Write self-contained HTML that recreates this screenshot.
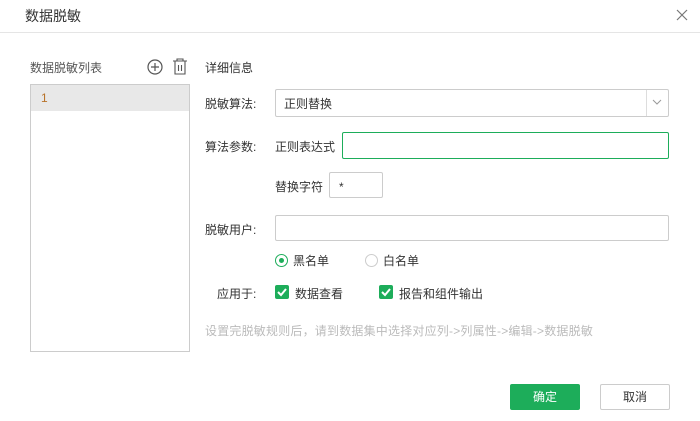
<!DOCTYPE html>
<html><head><meta charset="utf-8"><style>
*{box-sizing:border-box;margin:0;padding:0}
body{width:700px;height:421px;background:#fff;font-family:"Liberation Sans","Noto Sans CJK SC",sans-serif;font-size:12px;color:#333;position:relative;overflow:hidden}
.a{position:absolute}
.inp{position:absolute;border:1px solid #ccc;border-radius:2px;background:#fff}
</style></head><body>
<div class="a" style="left:25px;top:6px;font-size:14px;color:#333">数据脱敏</div>
<svg class="a" style="left:676px;top:9px" width="12" height="12"><path d="M1 1L11 11M11 1L1 11" stroke="#777" stroke-width="1.2"/></svg>
<div class="a" style="left:0;top:32px;width:700px;height:1px;background:#e5e5e5"></div>
<div class="a" style="left:30px;top:59px;color:#555">数据脱敏列表</div>
<svg class="a" style="left:147px;top:59px" width="16" height="16"><circle cx="8" cy="8" r="7" fill="none" stroke="#555" stroke-width="1.2"/><path d="M8 4V12M4 8H12" stroke="#555" stroke-width="1.2"/></svg>
<svg class="a" style="left:172px;top:58px" width="16" height="17"><path d="M1 3H15M5 3V1H11V3M3 3V16H13V3M6.5 7V13M9.5 7V13" fill="none" stroke="#555" stroke-width="1.1"/></svg>
<div class="a" style="left:30px;top:84px;width:160px;height:268px;border:1px solid #ccc"></div>
<div class="a" style="left:31px;top:85px;width:158px;height:26px;background:#e8e8e8"></div>
<div class="a" style="left:41px;top:91px;color:#b8732a">1</div>
<div class="a" style="left:205px;top:59px;color:#333">详细信息</div>
<div class="a" style="left:205px;top:95px">脱敏算法:</div>
<div class="inp" style="left:275px;top:89px;width:394px;height:28px"></div>
<div class="a" style="left:284px;top:95px">正则替换</div>
<div class="a" style="left:646px;top:90px;width:1px;height:26px;background:#ddd"></div>
<svg class="a" style="left:652px;top:98px" width="10" height="8"><path d="M1 2L5 6L9 2" fill="none" stroke="#999"/></svg>
<div class="a" style="left:205px;top:138px">算法参数:</div>
<div class="a" style="left:275px;top:138px">正则表达式</div>
<div class="inp" style="left:342px;top:132px;width:327px;height:27px;border-color:#1dad5a"></div>
<div class="a" style="left:275px;top:178px">替换字符</div>
<div class="inp" style="left:329px;top:172px;width:54px;height:26px"></div>
<div class="a" style="left:339px;top:180px">*</div>
<div class="a" style="left:205px;top:221px">脱敏用户:</div>
<div class="inp" style="left:275px;top:215px;width:394px;height:26px"></div>
<div class="a" style="left:275px;top:254px;width:13px;height:13px;border:1px solid #1dad5a;border-radius:50%"></div>
<div class="a" style="left:279px;top:258px;width:5px;height:5px;background:#1dad5a;border-radius:50%"></div>
<div class="a" style="left:293px;top:252px">黑名单</div>
<div class="a" style="left:365px;top:254px;width:13px;height:13px;border:1px solid #ccc;border-radius:50%"></div>
<div class="a" style="left:383px;top:252px">白名单</div>
<div class="a" style="left:217px;top:285px">应用于:</div>
<svg class="a" style="left:275px;top:285px" width="14" height="14"><rect width="14" height="14" rx="2" fill="#1dad5a"/><path d="M3 7L6 10L11 4" fill="none" stroke="#fff" stroke-width="2"/></svg>
<div class="a" style="left:295px;top:285px">数据查看</div>
<svg class="a" style="left:379px;top:285px" width="14" height="14"><rect width="14" height="14" rx="2" fill="#1dad5a"/><path d="M3 7L6 10L11 4" fill="none" stroke="#fff" stroke-width="2"/></svg>
<div class="a" style="left:399px;top:285px">报告和组件输出</div>
<div class="a" style="left:205px;top:322px;color:#bbb;letter-spacing:0.2px">设置完脱敏规则后，请到数据集中选择对应列->列属性->编辑->数据脱敏</div>
<div class="a" style="left:510px;top:384px;width:70px;height:26px;background:#1dad5a;border-radius:2px;color:#fff;text-align:center;line-height:26px">确定</div>
<div class="a" style="left:600px;top:384px;width:70px;height:26px;border:1px solid #ccc;border-radius:2px;text-align:center;line-height:24px">取消</div>
</body></html>
